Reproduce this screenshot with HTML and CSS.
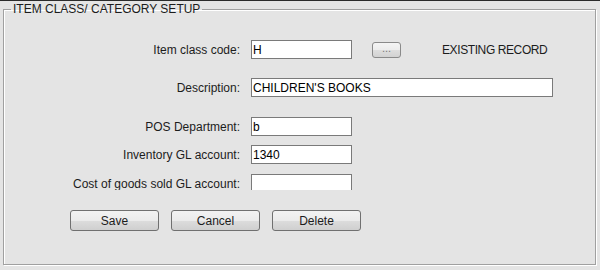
FILE: index.html
```
<!DOCTYPE html>
<html>
<head>
<meta charset="utf-8">
<link rel="stylesheet" href="styles.css">
</head>
<body>
<form class="setup">
  <fieldset class="frame">
    <legend class="frame-title">ITEM CLASS/ CATEGORY SETUP</legend>
    <div class="fields">
      <div class="group group-top">
        <div class="row">
          <label class="lbl">Item class code:</label>
          <div class="cell">
            <input class="txt txt-short" type="text" value="H">
            <button type="button" class="btn-lookup">...</button>
            <span class="status">EXISTING RECORD</span>
          </div>
        </div>
        <div class="row">
          <label class="lbl">Description:</label>
          <div class="cell"><input class="txt txt-long" type="text" value="CHILDREN'S BOOKS"></div>
        </div>
      </div>
      <div class="group group-bottom">
        <div class="row">
          <label class="lbl">POS Department:</label>
          <div class="cell"><input class="txt txt-short" type="text" value="b"></div>
        </div>
        <div class="row">
          <label class="lbl">Inventory GL account:</label>
          <div class="cell"><input class="txt txt-short" type="text" value="1340"></div>
        </div>
        <div class="row row-last">
          <label class="lbl">Cost of goods sold GL account:</label>
          <div class="cell"><input class="txt txt-short" type="text" value=""></div>
        </div>
      </div>
    </div>
    <div class="actions">
      <button type="button" class="btn">Save</button>
      <button type="button" class="btn">Cancel</button>
      <button type="button" class="btn">Delete</button>
    </div>
  </fieldset>
</form>
</body>
</html>
```
FILE: styles.css
```
html, body {
  margin: 0;
  padding: 0;
}
body {
  background: #e4e4e4;
  border-top: 1px solid #2a2a2a;
  font-family: "Liberation Sans", Arial, sans-serif;
  font-size: 12px;
  color: #1c1c1c;
  height: 269px;
  overflow: hidden;
}
.setup {
  margin: 0;
}
.frame {
  margin: 1px 0 0 3px;
  width: 593px;
  box-sizing: border-box;
  border: 1px solid #a0a0a0;
  box-shadow: 1px 1px 0 #ffffff, inset 1px 1px 0 #ffffff;
  padding: 24px 0 33px 7px;
  min-width: 0;
}
.frame-title {
  padding: 0 2px;
  line-height: 14px;
  font-size: 12px;
  color: #1c1c1c;
}
.fields {
  height: 150px;
  overflow: hidden;
  display: flex;
  flex-direction: column;
  gap: 20px;
}
.group {
  display: flex;
  flex-direction: column;
}
.group-top {
  gap: 19px;
}
.group-bottom {
  gap: 9px;
}
.row {
  display: grid;
  grid-template-columns: 229px 1fr;
  column-gap: 11px;
  align-items: center;
  height: 19px;
  flex: none;
}
.row-last {
  margin-top: 1px;
}
.lbl {
  text-align: right;
  white-space: nowrap;
  line-height: 14px;
}
.cell {
  display: flex;
  align-items: center;
}
.txt {
  box-sizing: border-box;
  height: 19px;
  border: 1px solid #7a7a7a;
  background: #ffffff;
  padding: 0 1px;
  margin: 0;
  font-family: "Liberation Sans", Arial, sans-serif;
  font-size: 12px;
  color: #000;
  outline: none;
}
.txt-short {
  width: 101px;
}
.txt-long {
  width: 302px;
}
.btn-lookup {
  box-sizing: border-box;
  width: 29px;
  height: 16px;
  margin: 0 0 0 20px;
  padding: 0 0 3px;
  border: 1px solid #8a8a8a;
  border-radius: 3px;
  background: linear-gradient(#f4f4f4, #ececec 50%, #dedede 50%, #d2d2d2);
  font-family: "Liberation Sans", Arial, sans-serif;
  font-size: 11px;
  line-height: 10px;
  color: #7a7a7a;
}
.status {
  margin-left: 41px;
  white-space: nowrap;
  letter-spacing: -0.4px;
  color: #1c1c1c;
}
.actions {
  display: flex;
  gap: 12px;
  margin-top: 20px;
  padding-left: 59px;
}
.btn {
  box-sizing: border-box;
  width: 89px;
  height: 21px;
  margin: 0;
  padding: 0;
  border: 1px solid #707070;
  border-radius: 3px;
  background: linear-gradient(#f2f2f2, #ebebeb 50%, #dddddd 50%, #cfcfcf);
  font-family: "Liberation Sans", Arial, sans-serif;
  font-size: 12px;
  color: #1c1c1c;
}
```
